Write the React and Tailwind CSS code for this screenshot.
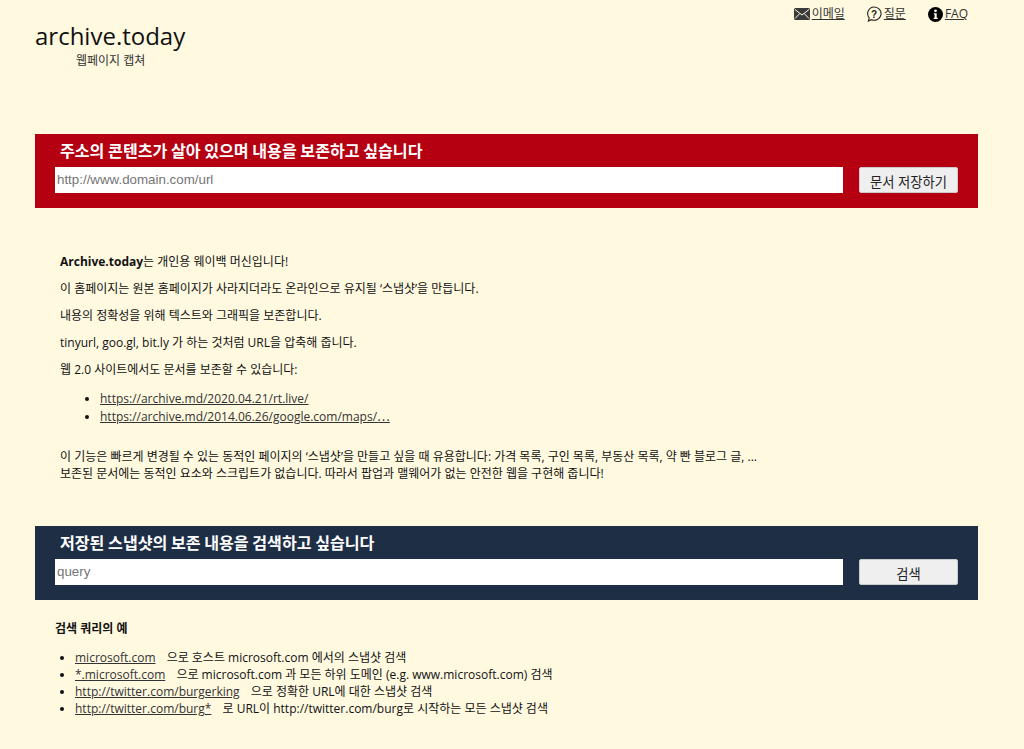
const linkClass = 'text-[#333] underline';

function MailIcon() {
  return (
    <svg width="16" height="12" viewBox="0 0 16 12" className="shrink-0">
      <rect width="16" height="12" rx="1.5" fill="#3a3a3a" />
      <path d="M1 1.5 8 7l7-5.5M1 10.5 5.8 5.5M15 10.5 10.2 5.5" fill="none" stroke="#fff9e0" strokeWidth="1" />
    </svg>
  );
}

function QuestionIcon() {
  return (
    <svg width="16" height="16" viewBox="0 0 16 16" className="shrink-0">
      <path d="M8 1a7 6.6 0 1 1-2.6 12.7L2.4 15l.8-3.2A6.6 6.6 0 0 1 8 1z" fill="none" stroke="#222" strokeWidth="1.1" />
      <text x="8" y="11.5" textAnchor="middle" fontSize="10" fontWeight="700" fill="#222" fontFamily="'Liberation Sans', sans-serif">?</text>
    </svg>
  );
}

function InfoIcon() {
  return (
    <svg width="15" height="15" viewBox="0 0 15 15" className="shrink-0">
      <circle cx="7.5" cy="7.5" r="7.5" fill="#000" />
      <circle cx="7.5" cy="3.8" r="1.4" fill="#fff9e0" />
      <path d="M5.8 6.2h2.9v4.6h1v1.2H5.6v-1.2h1V7.4h-.8z" fill="#fff9e0" />
    </svg>
  );
}

function Banner({ title, placeholder, button, color }) {
  return (
    <div className={`ml-[35px] h-[74px] w-[943px] pt-[6px] ${color}`}>
      <div className="pl-[25px] font-['Noto_Sans_CJK_KR',sans-serif] text-[16.1px] leading-[20px] font-bold text-white">{title}</div>
      <div className="mt-[7px] flex pl-5">
        <input
          placeholder={placeholder}
          className="h-[26px] w-[788px] bg-white px-[2px] pb-[2px] font-['Liberation_Sans',sans-serif] text-[13.33px] placeholder:text-[#757575] outline-none"
        />
        <button className="ml-4 h-[26px] w-[99px] rounded-[2px] border border-[#ccc] bg-[#efefef] pt-[5px] text-[13.3px] text-[#222]">
          {button}
        </button>
      </div>
    </div>
  );
}

const intro = [
  <><b>Archive.today</b>는 개인용 웨이백 머신입니다!</>,
  '이 홈페이지는 원본 홈페이지가 사라지더라도 온라인으로 유지될 ‘스냅샷’을 만듭니다.',
  '내용의 정확성을 위해 텍스트와 그래픽을 보존합니다.',
  'tinyurl, goo.gl, bit.ly 가 하는 것처럼 URL을 압축해 줍니다.',
  '웹 2.0 사이트에서도 문서를 보존할 수 있습니다:',
];

const examples = [
  ['microsoft.com', '으로 호스트 microsoft.com 에서의 스냅샷 검색'],
  ['*.microsoft.com', '으로 microsoft.com 과 모든 하위 도메인 (e.g. www.microsoft.com) 검색'],
  ['http://twitter.com/burgerking', '으로 정확한 URL에 대한 스냅샷 검색'],
  ['http://twitter.com/burg*', '로 URL이 http://twitter.com/burg로 시작하는 모든 스냅샷 검색'],
];

export default function App() {
  return (
    <div className="h-[749px] overflow-hidden bg-[#fff9e0] font-['Open_Sans','Noto_Sans_CJK_KR',sans-serif] text-[12px] text-[#111]">
      {/* Top links */}
      <div className="flex h-[24px] justify-end pr-14 pt-[4px] leading-[18px]">
        <a className={`flex items-center gap-[2px] ${linkClass}`}><MailIcon />이메일</a>
        <a className={`ml-[21px] flex items-center gap-[2px] ${linkClass}`}><QuestionIcon />질문</a>
        <a className={`ml-[22px] flex items-center gap-[2px] ${linkClass}`}><InfoIcon />FAQ</a>
      </div>

      {/* Logo */}
      <div className="pl-[35px] text-[24px] leading-[24px] text-[#111]">archive.today</div>
      <div className="mt-[4px] pl-[76px] leading-[18px] text-[#333]">웹페이지 캡쳐</div>

      <div className="mt-[64px]">
        <Banner
          title="주소의 콘텐츠가 살아 있으며 내용을 보존하고 싶습니다"
          placeholder="http://www.domain.com/url"
          button="문서 저장하기"
          color="bg-[#b40010]"
        />
      </div>

      {/* Description */}
      <div className="mt-[45px] pl-[60px] leading-[18px]">
        {intro.map((line, i) => (
          <p key={i} className="mb-[9px]">{line}</p>
        ))}
        <ul className="mt-[11px] list-disc pl-10">
          <li><a className={linkClass}>https://archive.md/2020.04.21/rt.live/</a></li>
          <li><a className={linkClass}>https://archive.md/2014.06.26/google.com/maps/<span className="font-['Noto_Sans_CJK_JP',sans-serif] leading-none">…</span></a></li>
        </ul>
        <p className="mt-[22px] leading-[17px]">이 기능은 빠르게 변경될 수 있는 동적인 페이지의 ‘스냅샷’을 만들고 싶을 때 유용합니다: 가격 목록, 구인 목록, 부동산 목록, 약 빤 블로그 글, ...</p>
        <p className="leading-[17px]">보존된 문서에는 동적인 요소와 스크립트가 없습니다. 따라서 팝업과 맬웨어가 없는 안전한 웹을 구현해 줍니다!</p>
      </div>

      <div className="mt-[44px]">
        <Banner
          title="저장된 스냅샷의 보존 내용을 검색하고 싶습니다"
          placeholder="query"
          button="검색"
          color="bg-[#1e2e45]"
        />
      </div>

      {/* Query examples */}
      <div className="mt-[20px] pl-[55px] leading-[17px]">
        <div className="font-bold">검색 쿼리의 예</div>
        <ul className="mt-[12px] list-disc pl-5">
          {examples.map(([href, text]) => (
            <li key={href}>
              <a className={`mr-[8px] ${linkClass}`}>{href}</a> {text}
            </li>
          ))}
        </ul>
      </div>
    </div>
  );
}
